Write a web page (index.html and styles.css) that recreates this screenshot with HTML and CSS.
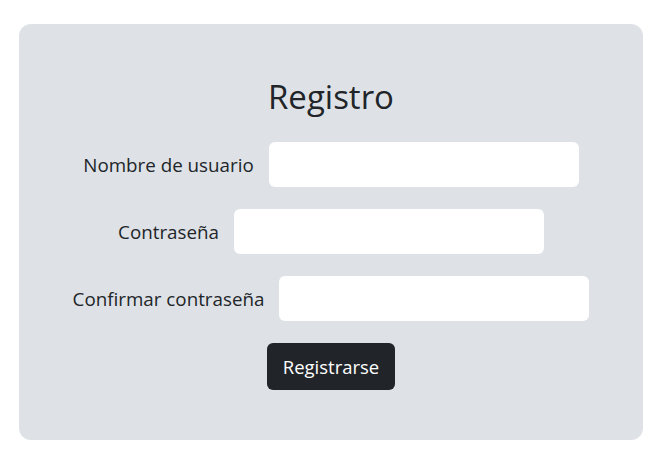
FILE: index.html
```html
<!DOCTYPE html>
<html lang="es">
<head>
    <meta charset="UTF-8">
    <meta name="viewport" content="width=device-width, initial-scale=1.0">
    <title>Registro</title>
    <link rel="stylesheet" href="styles.css">
</head>
<body>
    <div class="card">
        <h1 class="title">Registro</h1>
        <form class="form">
            <div class="row">
                <label for="user">Nombre de usuario</label>
                <input type="text" id="user">
            </div>
            <div class="row">
                <label for="pass">Contraseña</label>
                <input type="password" id="pass">
            </div>
            <div class="row">
                <label for="pass2">Confirmar contraseña</label>
                <input type="password" id="pass2">
            </div>
            <button type="submit" class="btn">Registrarse</button>
        </form>
    </div>
</body>
</html>
```

FILE: styles.css
```css
body {
    margin: 0;
    background-color: #fff;
    font-family: "Open Sans", "Noto Sans", sans-serif;
    color: #212529;
}
.card {
    margin: 24px 0 0 19px;
    width: 624px;
    height: 416px;
    box-sizing: border-box;
    padding-top: 52px;
    background-color: #dee2e6;
    border-radius: 12px;
}
.title {
    margin: 0 0 24px 0;
    text-align: center;
    font-size: 33px;
    font-weight: 400;
    line-height: 42px;
}
.form {
    display: flex;
    flex-direction: column;
    align-items: center;
    gap: 22px;
}
.row {
    display: flex;
    align-items: center;
    gap: 15px;
}
label {
    font-size: 18.8px;
}
input {
    width: 310px;
    height: 45px;
    box-sizing: border-box;
    border: none;
    border-radius: 6px;
    background-color: #fff;
    padding: 0 12px;
    font-size: 18px;
}
.btn {
    width: 128px;
    height: 47px;
    border: none;
    border-radius: 6px;
    background-color: #212529;
    color: #fff;
    font-family: inherit;
    font-size: 18.5px;
    margin-top: 0;
}
```
